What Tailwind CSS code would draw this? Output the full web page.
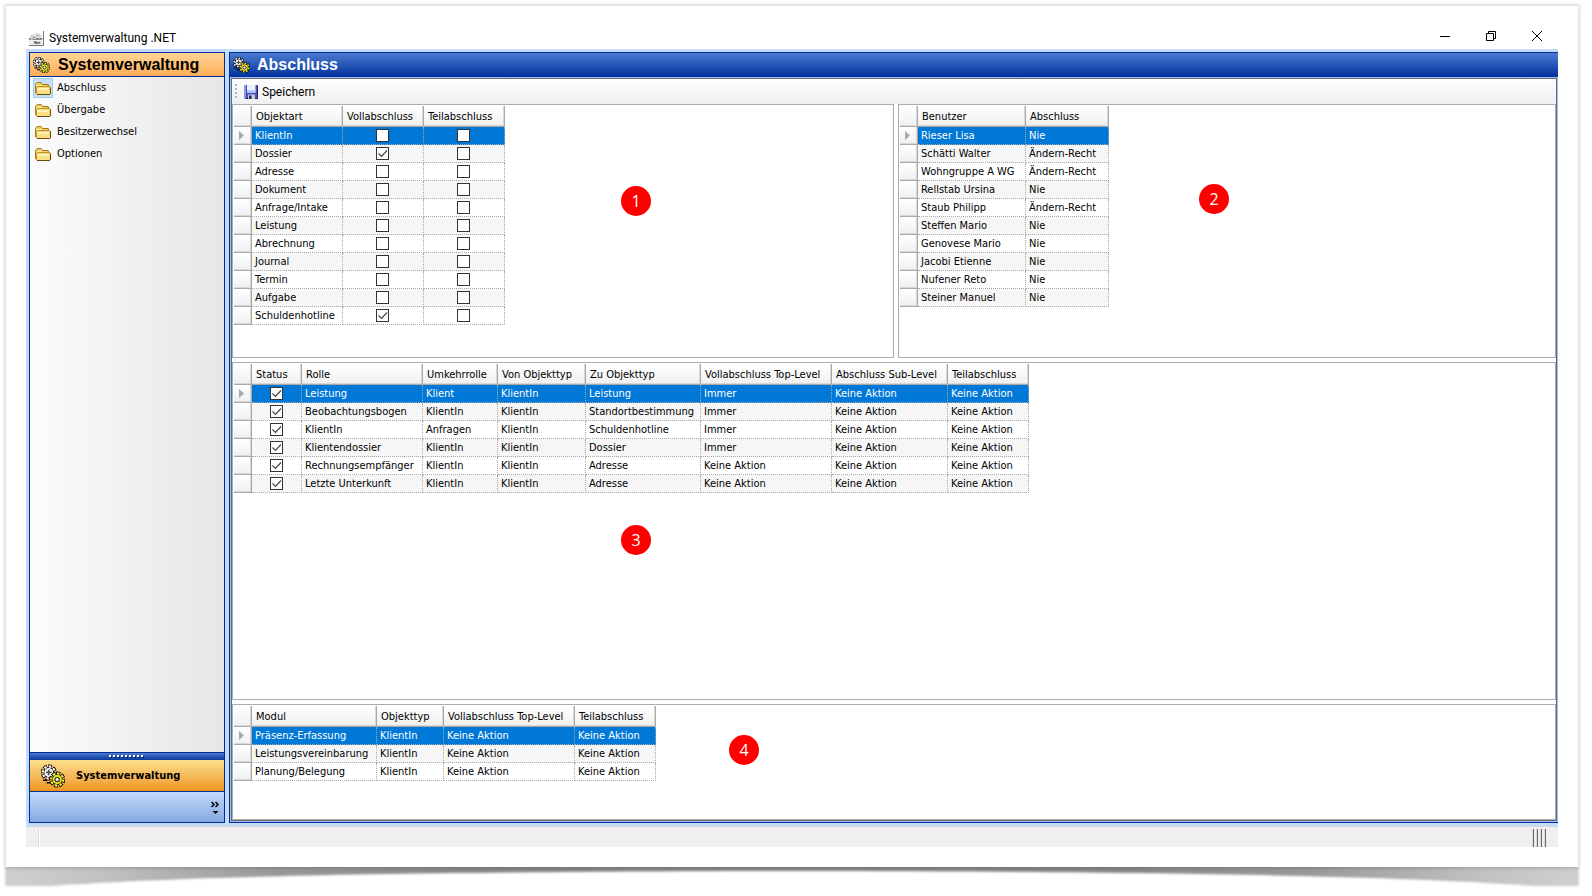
<!DOCTYPE html>
<html lang="de">
<head>
  <meta charset="UTF-8">
  <meta name="viewport" content="width=device-width, initial-scale=1">
  <title>Systemverwaltung .NET</title>
  <script src="https://cdn.jsdelivr.net/npm/@tailwindcss/browser@4"></script>
</head>
<body class="bg-white text-black font-['DejaVu_Sans_Condensed','DejaVu_Sans',sans-serif] text-[11px] leading-4">

  <!-- shared icons -->
  <svg class="hidden">
    <symbol id="gears" viewBox="0 0 17 16">
      <circle cx="5.5" cy="5.500" r="4.600" pathLength="16" fill="none" stroke="#000" stroke-width="2.200" stroke-dasharray="1.500 .500" stroke-dashoffset=".25"/>
      <circle cx="5.5" cy="5.500" r="3.900" fill="#000"/>
      <circle cx="5.5" cy="5.500" r="4.300" pathLength="16" fill="none" stroke="#fff" stroke-width="1.600" stroke-dasharray="1 1"/>
      <circle cx="5.5" cy="5.500" r="2.700" fill="#d8d8d8" stroke="#fff" stroke-width="1"/>
      <path d="M3.500 5.500h4M5.500 3.500v4" stroke="#444" stroke-width=".9"/>
      <path d="M1.500 11h3M4 12.800h3" stroke="#000" stroke-width="1.100"/>
      <circle cx="11.500" cy="10.500" r="4.600" pathLength="16" fill="none" stroke="#000" stroke-width="2.200" stroke-dasharray="1.500 .500" stroke-dashoffset=".25"/>
      <circle cx="11.500" cy="10.500" r="3.900" fill="#000"/>
      <circle cx="11.500" cy="10.500" r="4.300" pathLength="16" fill="none" stroke="#f3ea3c" stroke-width="1.600" stroke-dasharray="1 1"/>
      <circle cx="11.500" cy="10.500" r="2.600" fill="none" stroke="#e9de20" stroke-width="1.500"/>
      <circle cx="11.500" cy="10.500" r="1.400" fill="#fff" stroke="#333" stroke-width=".6"/>
    </symbol>
    <symbol id="folder" viewBox="0 0 16 13">
      <path d="M.5 11V2.5L2 .6h4.3l1.2 1.9h5.8V5" fill="#f3d168" stroke="#a87a14"/>
      <path d="M1.5 3h5l1 1h5.3v7H1.5z" fill="#fbe9a0"/>
      <path d="M2.5 4.6h12.3l.6.6v6.6l-.8.7H2.1l-.8-.8V5.6z" fill="#fadf86" stroke="#b98a1c"/>
      <path d="M2.500 6h11v2h-11z" fill="#fff3b4"/>
      <path d="M2 12.5h13M15.5 5.5v6.5" stroke="#6d4a08"/>
    </symbol>
  </svg>

  <div class="flex min-h-screen flex-col pt-[6px] pr-[14px] pb-[29px] pl-[6px]">
    <div class="relative flex flex-1 flex-col">

      <!-- curved paper shadow -->
      <svg class="absolute top-full left-0 -ml-[6px] h-[29px] w-[calc(100%+20px)]" viewBox="0 0 1592 29" preserveAspectRatio="none">
        <defs>
          <linearGradient id="shade">
            <stop offset="0" stop-color="#d0d0d0"/>
            <stop offset=".06" stop-color="#c2c2c2"/>
            <stop offset=".17" stop-color="#999"/>
            <stop offset=".3" stop-color="#888"/>
            <stop offset=".7" stop-color="#888"/>
            <stop offset=".83" stop-color="#999"/>
            <stop offset=".94" stop-color="#c2c2c2"/>
            <stop offset="1" stop-color="#d0d0d0"/>
          </linearGradient>
          <filter id="soft" x="-1%" y="-40%" width="102%" height="180%"><feGaussianBlur stdDeviation="1"/></filter>
        </defs>
        <path d="M5-6H1579V19H1535C1400 9 1200 5 796 4C400 5 190 9 50 19H5Z" fill="url(#shade)" filter="url(#soft)"/>
      </svg>

      <div class="relative flex flex-1 flex-col bg-white px-5 pt-[22px] pb-5 shadow-[0_0_4px_1px_rgba(0,0,0,0.2)]">

        <!-- title bar -->
        <header class="flex h-[21px] items-start justify-between pl-[3px] font-['Roboto','Noto_Sans',sans-serif] text-[12px]">
          <div class="flex items-center gap-[5px] pt-[1px]">
            <svg class="h-[15px] w-[15px]" viewBox="0 0 15 15">
              <path d="M1 6A6.5 5.5 0 0 1 13 6V7H1z" fill="#c9c9c9"/>
              <path d="M3 4.5A5 4 0 0 1 9 1.5L6 5z" fill="#eee"/>
              <rect y="6" width="14" height="8" fill="#f1eeee"/>
              <path d="M14.5 0V14.5H0" fill="none" stroke="#777"/>
              <text x="0" y="9" font-family="Liberation Sans" font-size="4" font-weight="bold" fill="#222">e-Case</text>
              <text x="5" y="13" font-family="Liberation Sans" font-size="4" font-weight="bold" fill="#222">Net</text>
            </svg>
            <h1 class="leading-[18px]">Systemverwaltung .NET</h1>
          </div>
          <div class="flex items-center gap-[34px] pr-[15px]">
            <button aria-label="Minimieren"><svg class="h-4 w-3" viewBox="0 0 12 16"><path d="M1 8.5h10" stroke="#000"/></svg></button>
            <button aria-label="Verkleinern"><svg class="h-4 w-3" viewBox="0 0 12 16"><path d="M1.500 5.500h7v7h-7zM3.500 5.500v-2h7v7h-2" fill="none" stroke="#000"/></svg></button>
            <button aria-label="Schliessen"><svg class="h-4 w-3" viewBox="0 0 12 16"><path d="M1 3l10 10M11 3L1 13" stroke="#000"/></svg></button>
          </div>
        </header>

        <div class="flex flex-1 gap-1 bg-[#c4dafa] pt-[3px] pb-[3px] pl-[3px]">

          <!-- navigation -->
          <nav class="flex w-[196px] shrink-0 flex-col border border-[#002d96]">
            <h2 class="flex h-[24px] items-center gap-2 border-b border-[#002d96] bg-linear-to-b from-[#ffd597] to-[#ffac55] pl-[3px] font-['Liberation_Sans',sans-serif] text-[16px] leading-5 font-bold">
              <svg class="h-4 w-[17px]"><use href="#gears"/></svg>Systemverwaltung
            </h2>
            <ul class="flex-1 bg-linear-to-r from-[#fcfcfc] to-[#e6e6e6] pl-[3px]">
              <li><a href="#" class="flex h-[22px] items-center gap-1"><span class="flex h-5 w-5 items-center justify-center bg-[#c5e0f7] outline outline-[#a5cdf0] -outline-offset-1"><svg class="h-[13px] w-4"><use href="#folder"/></svg></span>Abschluss</a></li>
              <li><a href="#" class="flex h-[22px] items-center gap-1"><span class="flex h-5 w-5 items-center justify-center"><svg class="h-[13px] w-4"><use href="#folder"/></svg></span>Übergabe</a></li>
              <li><a href="#" class="flex h-[22px] items-center gap-1"><span class="flex h-5 w-5 items-center justify-center"><svg class="h-[13px] w-4"><use href="#folder"/></svg></span>Besitzerwechsel</a></li>
              <li><a href="#" class="flex h-[22px] items-center gap-1"><span class="flex h-5 w-5 items-center justify-center"><svg class="h-[13px] w-4"><use href="#folder"/></svg></span>Optionen</a></li>
            </ul>
            <div class="flex h-2 items-center justify-center border-t border-[#002d96] bg-linear-to-b from-[#4a7bd0] to-[#0a369d]">
              <svg class="h-[3px] w-9" viewBox="0 0 36 3"><path d="M1 2h35" stroke="#0a2a70" stroke-width="2" stroke-dasharray="2 2"/><path d="M0 1h34" stroke="#fff" stroke-width="2" stroke-dasharray="2 2"/></svg>
            </div>
            <button class="flex h-[32px] items-center gap-[11px] border-b border-[#002d96] bg-linear-to-b from-[#fbe08c] to-[#ee9515] pl-[11px] text-left font-bold">
              <svg class="h-6 w-6"><use href="#gears"/></svg>Systemverwaltung
            </button>
            <div class="flex h-[30px] items-center justify-end bg-linear-to-b from-[#c2dafa] to-[#86a9e3] pr-1">
              <button aria-label="Schaltflächen konfigurieren"><svg class="h-[14px] w-[9px]" viewBox="0 0 9 14"><path d="M.5 2l2.500 2.500L.5 7M4.500 2l2.500 2.500L4.500 7" fill="none" stroke="#000" stroke-width="1.500"/><path d="M1.500 11h6L4.500 14z"/></svg></button>
            </div>
          </nav>

          <!-- content -->
          <main class="flex min-w-0 flex-1 flex-col border-y border-l border-[#002d96]">
            <h2 class="flex h-[24px] items-center gap-[7px] bg-linear-to-b from-[#4a7bd0] to-[#03309c] pl-[3px] font-['Liberation_Sans',sans-serif] text-[16px] leading-5 font-bold text-white">
              <svg class="h-4 w-[17px]"><use href="#gears"/></svg>Abschluss
            </h2>
            <div class="flex flex-1 flex-col border border-[#9ebef5] bg-white">
              <div class="flex flex-1 flex-col border border-[#6a6a6a]">

                <div class="flex h-[25px] items-center gap-[7px] bg-linear-to-b from-[#fdfdfd] to-[#f0f0f0] pl-[3px]">
                  <svg class="h-[15px] w-[2px]" viewBox="0 0 2 15"><path d="M1 0v15" stroke="#b4b4b4" stroke-width="2" stroke-dasharray="2 2"/></svg>
                  <button class="flex items-center gap-1 font-['Roboto','Noto_Sans',sans-serif] text-[12px]">
                    <svg class="h-[14px] w-[14px]" viewBox="0 0 14 14">
                      <path d="M0 0h14v14H1.500L0 12.500z" fill="#4a50c0"/>
                      <path d="M0 0h2v12.500H0z" fill="#8f98e6"/>
                      <path d="M13 1h1v13H2v-1h11z" fill="#20246c"/>
                      <path d="M3 0h8.500v7.500H3z" fill="#e8f0ff"/>
                      <path d="M3 5h8.500v2.500H3z" fill="#b9cdf6"/>
                      <path d="M4 9.500h7V14H4z" fill="#c8c8d0"/>
                      <path d="M5 10.500h2.500V14H5z" fill="#23265e"/>
                    </svg>
                    Speichern
                  </button>
                </div>

                <div class="grid h-[254px] grid-cols-[663fr_659fr] gap-1">
                  <section class="relative border border-[#abacb0] p-px">
                    <table id="objektarten" class="table-fixed border-separate border-spacing-0"></table>
                    <span class="absolute top-[81px] left-[388px] flex h-[30px] w-[30px] items-center justify-center rounded-full bg-[#fe0000] font-['Open_Sans',sans-serif] text-[16px] text-white">1</span>
                  </section>
                  <section class="relative border border-[#abacb0] p-px">
                    <table id="benutzer" class="table-fixed border-separate border-spacing-0"></table>
                    <span class="absolute top-[79px] left-[300px] flex h-[30px] w-[30px] items-center justify-center rounded-full bg-[#fe0000] font-['Open_Sans',sans-serif] text-[16px] text-white">2</span>
                  </section>
                </div>

                <section class="relative mt-1 flex-1 border border-[#abacb0] p-px">
                  <table id="rollen" class="table-fixed border-separate border-spacing-0"></table>
                  <span class="absolute top-[162px] left-[388px] flex h-[30px] w-[30px] items-center justify-center rounded-full bg-[#fe0000] font-['Open_Sans',sans-serif] text-[16px] text-white">3</span>
                </section>

                <section class="relative mt-1 h-[116px] border border-[#abacb0] p-px">
                  <table id="module" class="table-fixed border-separate border-spacing-0"></table>
                  <span class="absolute top-[30px] left-[496px] flex h-[30px] w-[30px] items-center justify-center rounded-full bg-[#fe0000] font-['Open_Sans',sans-serif] text-[16px] text-white">4</span>
                </section>

              </div>
            </div>
          </main>
        </div>

        <!-- status bar -->
        <footer class="flex h-[21px] items-end justify-between border-t border-[#d7d7d7] bg-[#efefef] pr-3 pl-3">
          <div class="h-[18px] w-[2px] border-r border-white bg-[#d9d9d9]"></div>
          <svg class="h-[18px] w-[14px]" viewBox="0 0 14 18"><path d="M1.500 0v18M5.500 0v18M9.500 0v18M13.500 0v18" stroke="#666"/><path d="M.5 0v18M4.500 0v18M8.500 0v18M12.500 0v18" stroke="#dcdcdc"/></svg>
        </footer>
      </div>
    </div>
  </div>

  <script>
    const tables = {
      objektarten: {
        cols: [['Objektart', 91], ['Vollabschluss', 81], ['Teilabschluss', 81]],
        rows: [
          ['KlientIn', false, false],
          ['Dossier', true, false],
          ['Adresse', false, false],
          ['Dokument', false, false],
          ['Anfrage/Intake', false, false],
          ['Leistung', false, false],
          ['Abrechnung', false, false],
          ['Journal', false, false],
          ['Termin', false, false],
          ['Aufgabe', false, false],
          ['Schuldenhotline', true, false],
        ],
      },
      benutzer: {
        cols: [['Benutzer', 108], ['Abschluss', 83]],
        rows: [
          ['Rieser Lisa', 'Nie'],
          ['Schätti Walter', 'Ändern-Recht'],
          ['Wohngruppe A WG', 'Ändern-Recht'],
          ['Rellstab Ursina', 'Nie'],
          ['Staub Philipp', 'Ändern-Recht'],
          ['Steffen Mario', 'Nie'],
          ['Genovese Mario', 'Nie'],
          ['Jacobi Etienne', 'Nie'],
          ['Nufener Reto', 'Nie'],
          ['Steiner Manuel', 'Nie'],
        ],
      },
      rollen: {
        cols: [['Status', 50], ['Rolle', 121], ['Umkehrrolle', 75], ['Von Objekttyp', 88], ['Zu Objekttyp', 115], ['Vollabschluss Top-Level', 131], ['Abschluss Sub-Level', 116], ['Teilabschluss', 81]],
        rows: [
          [true, 'Leistung', 'Klient', 'KlientIn', 'Leistung', 'Immer', 'Keine Aktion', 'Keine Aktion'],
          [true, 'Beobachtungsbogen', 'KlientIn', 'KlientIn', 'Standortbestimmung', 'Immer', 'Keine Aktion', 'Keine Aktion'],
          [true, 'KlientIn', 'Anfragen', 'KlientIn', 'Schuldenhotline', 'Immer', 'Keine Aktion', 'Keine Aktion'],
          [true, 'Klientendossier', 'KlientIn', 'KlientIn', 'Dossier', 'Immer', 'Keine Aktion', 'Keine Aktion'],
          [true, 'Rechnungsempfänger', 'KlientIn', 'KlientIn', 'Adresse', 'Keine Aktion', 'Keine Aktion', 'Keine Aktion'],
          [true, 'Letzte Unterkunft', 'KlientIn', 'KlientIn', 'Adresse', 'Keine Aktion', 'Keine Aktion', 'Keine Aktion'],
        ],
      },
      module: {
        cols: [['Modul', 125], ['Objekttyp', 67], ['Vollabschluss Top-Level', 131], ['Teilabschluss', 81]],
        rows: [
          ['Präsenz-Erfassung', 'KlientIn', 'Keine Aktion', 'Keine Aktion'],
          ['Leistungsvereinbarung', 'KlientIn', 'Keine Aktion', 'Keine Aktion'],
          ['Planung/Belegung', 'KlientIn', 'Keine Aktion', 'Keine Aktion'],
        ],
      },
    };

    const headCell = 'border-r border-b border-[#a9a9a9] bg-linear-to-b from-white to-[#f0f0f0] p-0 shadow-[inset_-1px_-1px_0_#d8d8d8]';

    function checkbox(checked, label) {
      return `<div class="flex justify-center pr-px"><label class="grid h-[13px] w-[13px]">
        <input type="checkbox" aria-label="${label}" ${checked ? 'checked' : ''} class="peer col-start-1 row-start-1 h-[13px] w-[13px] appearance-none border border-[#333] bg-white">
        <svg viewBox="0 0 13 13" class="pointer-events-none col-start-1 row-start-1 hidden h-[13px] w-[13px] peer-checked:block"><path d="M2.500 6.500l3 3 5.500-6" fill="none" stroke="#444" stroke-width="1.200"/></svg>
      </label></div>`;
    }

    function renderTable(id) {
      const { cols, rows } = tables[id];
      const width = cols.reduce((sum, c) => sum + c[1], 18);
      const table = document.getElementById(id);
      table.style.width = width + 'px';
      table.innerHTML = `
        <colgroup><col style="width:18px">${cols.map(c => `<col style="width:${c[1]}px">`).join('')}</colgroup>
        <thead><tr class="h-[21px]">
          <td class="${headCell}"></td>
          ${cols.map(c => `<th scope="col" class="${headCell}"><div class="overflow-hidden pt-[2px] pl-1 text-left font-normal whitespace-nowrap">${c[0]}</div></th>`).join('')}
        </tr></thead>
        <tbody>${rows.map((row, i) => `
          <tr class="h-[18px] ${i === 0 ? 'bg-[#0078d7] text-white' : i % 2 ? 'bg-[#f6f6f6]' : 'bg-white'}">
            <td class="${headCell}">${i === 0 ? '<svg class="ml-[5px] h-[9px] w-[5px]" viewBox="0 0 5 9"><path d="M0 0l5 4.500L0 9z" fill="#a9a9a9"/></svg>' : ''}</td>
            ${row.map((v, c) => `<td class="border-r border-b border-dotted border-[#a9a9a9] p-0 leading-4">${typeof v === 'boolean'
              ? checkbox(v, cols[c][0])
              : `<div class="overflow-hidden pl-[3px] whitespace-nowrap">${v}</div>`}</td>`).join('')}
          </tr>`).join('')}
        </tbody>`;
    }

    Object.keys(tables).forEach(renderTable);
  </script>
</body>
</html>
